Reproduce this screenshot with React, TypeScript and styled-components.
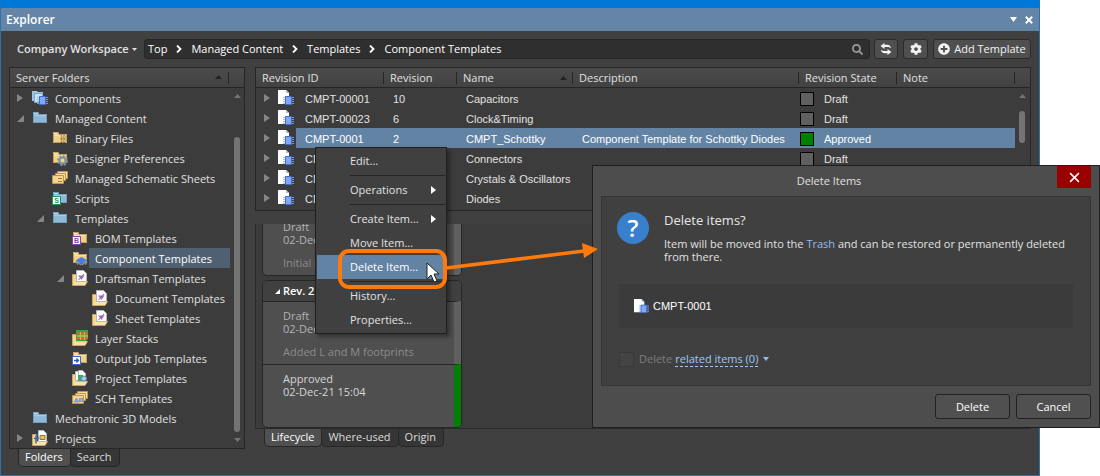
import React from "react";
import styled, { createGlobalStyle, css } from "styled-components";
import { FaCog, FaPlusCircle, FaSearch } from "react-icons/fa";

const ui = '"Open Sans", "Noto Sans", sans-serif';
const grid = '"Liberation Sans", Arial, sans-serif';

const GlobalStyle = createGlobalStyle`
  *, *::before, *::after { box-sizing: border-box; }
  body { margin: 0; background: #fff; font: 11px/16px ${ui}; color: #e0e0e0; }
  button, input { font: inherit; color: inherit; }
  ul { list-style: none; margin: 0; padding: 0; }
  svg { display: block; flex: none; }
`;

/* ---------- page and window frame ---------- */

const Page = styled.div`
  position: relative;
`;

const Window = styled.main`
  position: relative;
  margin-right: 60px;
  background: #404040;
  border: 1px solid #2f71ac;
  border-top: 8px solid #0078d7;
`;

const TitleBar = styled.header`
  display: flex;
  align-items: center;
  gap: 8px;
  height: 23px;
  padding: 0 6px 0 5px;
  background: #6485a6;
  color: #fff;
`;

const WindowTitle = styled.h1`
  flex: 1;
  margin: 0;
  font: 600 12px/16px ${ui};
`;

const BareButton = styled.button`
  display: flex;
  align-items: center;
  padding: 0;
  border: 0;
  background: none;
`;

const Toolbar = styled.div`
  display: flex;
  align-items: center;
  gap: 4px;
  padding: 8px;
`;

const WorkspaceButton = styled(BareButton)`
  gap: 3px;
  width: 131px;
  padding-left: 8px;
  font-weight: 600;
  white-space: nowrap;
`;

const PathBox = styled.nav`
  display: flex;
  flex: 1;
  align-items: center;
  height: 20px;
  padding: 0 6px 0 3px;
  gap: 9px;
  background: #2f2f2f;
  border: 1px solid #272727;
  border-radius: 3px;
  color: #fff;
`;

const Crumb = styled.a`
  color: inherit;
  text-decoration: none;
  white-space: nowrap;
`;

const SearchButton = styled(BareButton)`
  margin-left: auto;
  color: #9a9a9a;
`;

const ToolButton = styled.button<{ $width: number }>`
  display: flex;
  align-items: center;
  justify-content: center;
  gap: 4px;
  width: ${(p) => p.$width}px;
  height: 20px;
  padding: 0;
  margin-right: ${(p) => (p.$width < 40 ? 1 : 0)}px;
  background: #4f4f4f;
  border: 1px solid #2b2b2b;
  border-radius: 3px;
  color: #f2f2f2;
  white-space: nowrap;
`;

const Columns = styled.div`
  display: grid;
  grid-template-columns: 236px minmax(0, 1fr);
  gap: 10px;
  padding: 0 8px 8px;
`;

const Column = styled.section`
  display: flex;
  flex-direction: column;
`;

/* ---------- folder tree ---------- */

const headerFill = css`
  background: linear-gradient(#4b4b4b, #424242);
  border-bottom: 1px solid #262626;
`;

const TreePanel = styled.div`
  background: #3c3c3c;
  border: 1px solid #262626;
`;

const TreeHeader = styled.div`
  ${headerFill}
  display: flex;
  align-items: center;
  height: 20px;
  padding-left: 6px;
`;

const TreeTitle = styled.span`
  flex: 1;
  line-height: 18px;
  padding-top: 1px;
`;

const SortMark = styled.span`
  width: 14px;
  height: 12px;
  padding-top: 3px;
  border-right: 1px solid #262626;
`;

const TreeHeaderEnd = styled.span`
  width: 15px;
`;

const TreeBody = styled.div`
  display: flex;
`;

const Tree = styled.ul`
  flex: 1;
`;

const TreeRow = styled.li<{ $level: number }>`
  display: flex;
  align-items: center;
  height: 20px;
  padding-left: ${(p) => 7 + p.$level * 20}px;
`;

const Toggle = styled.span`
  width: 15px;
`;

const TreeLabel = styled.span<{ $selected?: boolean }>`
  flex: 1;
  height: 20px;
  padding: 3px 0 1px 6px;
  margin-left: 1px;
  background: ${(p) => (p.$selected ? "#4e6071" : "transparent")};
  color: ${(p) => (p.$selected ? "#fff" : "inherit")};
  white-space: nowrap;
`;

const ScrollTrack = styled.div`
  display: flex;
  flex-direction: column;
  align-items: center;
  width: 14px;
  padding: 6px 0;
`;

const Thumb = styled.div<{ $top: number; $height?: number }>`
  flex: ${(p) => (p.$height ? "none" : "1")};
  width: 6px;
  height: ${(p) => (p.$height ? p.$height + "px" : "auto")};
  margin: ${(p) => p.$top}px 0 6px;
  border-radius: 3px;
  background: #747474;
`;

const Tabs = styled.div`
  display: flex;
  padding-left: 9px;
`;

const Tab = styled.button<{ $active?: boolean }>`
  height: 18px;
  padding: 0 7px 1px 6px;
  margin-right: -1px;
  border: 1px solid #262626;
  border-top: 0;
  border-radius: 0 0 5px 5px;
  background: ${(p) => (p.$active ? "#505050" : "#363636")};
  color: ${(p) => (p.$active ? "#fff" : "#dcdcdc")};
  line-height: 16px;
`;

/* ---------- revision table ---------- */

const TablePanel = styled.div`
  padding-bottom: 2px;
  background: #3c3c3c;
  border: 1px solid #262626;
`;

const Table = styled.table`
  width: 100%;
  table-layout: fixed;
  border-collapse: separate;
  border-spacing: 0;
`;

const HeadCell = styled.th`
  ${headerFill}
  height: 20px;
  padding: 1px 0 0;
  font-weight: 400;
  text-align: left;
`;

const HeadInner = styled.div`
  display: flex;
  align-items: center;
  justify-content: space-between;
  height: 12px;
  padding: 0 5px 0 6px;
  border-right: 1px solid #262626;
  white-space: nowrap;
`;

const Row = styled.tr<{ $selected?: boolean }>`
  color: ${(p) => (p.$selected ? "#fff" : "#e2e2e2")};
  --row: ${(p) => (p.$selected ? "#6283a4" : "transparent")};
`;

const Cell = styled.td`
  height: 20px;
  padding: 2px 0 0 9px;
  background: var(--row);
  font: 11px/16px ${grid};
  white-space: nowrap;
`;

const IconCell = styled(Cell)`
  padding: 0;
  background: none;
`;

const IconPair = styled.div`
  display: flex;
  align-items: center;
  gap: 8px;
  padding-left: 8px;
`;

const StateCell = styled(Cell)`
  padding-left: 1px;
`;

const State = styled.div`
  display: flex;
  align-items: center;
  gap: 10px;
`;

const Swatch = styled.span<{ $color: string }>`
  width: 14px;
  height: 14px;
  border: 1px solid #000;
  background: ${(p) => p.$color};
`;

const ScrollCell = styled.td`
  padding: 0;
  vertical-align: top;
`;

/* ---------- lifecycle ---------- */

const LifecyclePanel = styled.div`
  display: flex;
  flex: 1;
  flex-direction: column;
  justify-content: flex-end;
  gap: 4px;
  max-height: 205px;
  margin-top: 13px;
  padding-left: 6px;
  overflow: hidden;
  background: #3c3c3c;
  border: 1px solid #2b2b2b;
  border-top: 0;
`;

const Card = styled.article`
  width: 200px;
  flex: none;
  overflow: hidden;
  border: 1px solid #262626;
  border-radius: 5px;
  background: #4f4f4f;
`;

const CardHeader = styled.h2`
  display: flex;
  align-items: center;
  gap: 3px;
  height: 20px;
  margin: 0;
  padding-left: 12px;
  background: #404040;
  color: #fff;
  font: 600 11px/16px ${ui};
`;

const Stage = styled.div<{ $color: string; $muted?: boolean }>`
  height: 63px;
  padding: 7px 20px;
  border-top: 1px solid #262626;
  border-right: 7px solid ${(p) => p.$color};
  color: ${(p) => (p.$muted ? "#b4b4b4" : "#d6d6d6")};
  line-height: 13px;
`;

const StageNote = styled.p`
  margin: 10px 0 0;
  color: #8c8c8c;
  white-space: nowrap;
`;

/* ---------- context menu and callout ---------- */

const Menu = styled.div`
  position: absolute;
  left: 314px;
  top: 139px;
  width: 132px;
  padding: 1px;
  background: #404040;
  border: 1px solid #1f1f1f;
  box-shadow: 3px 3px 4px rgba(0, 0, 0, 0.35);
`;

const MenuItem = styled.button<{ $active?: boolean }>`
  display: flex;
  align-items: center;
  justify-content: space-between;
  width: 100%;
  height: 24px;
  padding: 0 9px 0 33px;
  border: 0;
  background: ${(p) => (p.$active ? "#6283a4" : "transparent")};
  color: ${(p) => (p.$active ? "#fff" : "#e2e2e2")};
  white-space: nowrap;
`;

const MenuRule = styled.hr`
  height: 1px;
  margin: 2px 0 2px 33px;
  border: 0;
  background: #262626;
`;

const Callout = styled.svg`
  position: absolute;
  left: 330px;
  top: 240px;
  pointer-events: none;
`;

/* ---------- dialog ---------- */

const Dialog = styled.section`
  position: absolute;
  top: 165px;
  right: 0;
  width: 508px;
  padding: 0 8px 8px;
  background: #4d4d4d;
  border: 1px solid #1f1f1f;
`;

const DialogBar = styled.div`
  display: grid;
  grid-template-columns: 1fr 34px;
  align-items: start;
  height: 30px;
`;

const DialogTitle = styled.h2`
  margin: 0;
  padding-top: 7px;
  font: 11px/16px ${ui};
  text-align: center;
`;

const CloseButton = styled.button`
  display: flex;
  align-items: center;
  justify-content: center;
  height: 22px;
  padding: 0;
  border: 0;
  background: #990000;
  color: #fff;
`;

const DialogBody = styled.div`
  padding: 15px 17px 16px;
  background: #404040;
  border: 1px solid #363636;
`;

const Message = styled.div`
  display: flex;
  gap: 15px;
  align-items: flex-start;
`;

const QuestionMark = styled.span`
  width: 32px;
  height: 32px;
  flex: none;
  margin-left: -2px;
  border-radius: 50%;
  background: #3880cc;
  color: #fff;
  font: 600 24px/32px ${ui};
  text-align: center;
`;

const Question = styled.h3`
  margin: 0 0 8px;
  font: 13px/16px ${ui};
  color: #e6e6e6;
`;

const Explanation = styled.p`
  margin: 0;
  padding-top: 1px;
  line-height: 13px;
`;

const TextLink = styled.a`
  color: #8ebdf0;
  text-decoration: none;
`;

const ItemBox = styled.div`
  display: flex;
  align-items: center;
  gap: 4px;
  height: 44px;
  margin-top: 21px;
  padding-left: 15px;
  background: #3b3b3b;
  color: #fff;
  font: 11px/16px ${grid};
`;

const RelatedRow = styled.div`
  display: flex;
  align-items: center;
  gap: 5px;
  height: 20px;
  margin-top: 21px;
`;

const Check = styled.input`
  appearance: none;
  width: 15px;
  height: 15px;
  margin: 0;
  background: #444;
  border: 1px solid #393939;
`;

const CheckLabel = styled.label`
  color: #7d7d7d;
  margin-right: -2px;
`;

const RelatedLink = styled(TextLink)`
  color: #9cc8f5;
  line-height: 15px;
  border-bottom: 1px dashed #9cc8f5;
`;

const DialogButtons = styled.div`
  display: flex;
  justify-content: flex-end;
  gap: 6px;
  padding-top: 8px;
`;

const DialogButton = styled.button`
  width: 75px;
  height: 25px;
  padding: 0;
  border: 1px solid #222;
  border-radius: 3px;
  background: #505050;
  color: #fff;
`;

/* ---------- small marks ---------- */

const Down = ({ w = 8, h = 4 }: { w?: number; h?: number }) => (
  <svg width={w} height={h} viewBox="0 0 8 4" preserveAspectRatio="none" aria-hidden>
    <path d="M0 0h8L4 4z" fill="currentColor" />
  </svg>
);

const ScrollDown = () => (
  <svg width="7" height="4" viewBox="0 0 7 4" aria-hidden>
    <path d="M0 0h7L3.500 4z" fill="#747474" />
  </svg>
);

const Up = ({ color = "#747474" }: { color?: string }) => (
  <svg width="7" height="4" viewBox="0 0 7 4" aria-hidden>
    <path d="M0 4h7L3.500 0z" fill={color} />
  </svg>
);

const Right = ({ color = "#858585", width = 6 }: { color?: string; width?: number }) => (
  <svg width={width} height="8" viewBox="0 0 6 8" preserveAspectRatio="none" aria-hidden>
    <path d="M0 0v8l6-4z" fill={color} />
  </svg>
);

const Expanded = ({ color = "#858585", size = 7 }: { color?: string; size?: number }) => (
  <svg width={size} height={size} viewBox="0 0 7 7" aria-hidden>
    <path d="M7 0v7H0z" fill={color} />
  </svg>
);

const Cross = ({ size, weight }: { size: number; weight: number }) => (
  <svg width={size} height={size} viewBox="0 0 10 10" aria-hidden>
    <path d="M1 1l8 8M9 1L1 9" stroke="currentColor" strokeWidth={weight} />
  </svg>
);

const Chevron = () => (
  <svg width="6" height="8" viewBox="0 0 6 8" aria-hidden>
    <path d="M1 .5L4.500 4 1 7.500" fill="none" stroke="#fff" strokeWidth="1.800" />
  </svg>
);

const RefreshIcon = () => (
  <svg width="12" height="12" viewBox="0 0 12 12" aria-hidden>
    <path d="M4.500 0v1.800h2.700c2.200 0 3.600 1.200 3.800 3.400C10 4.300 8.800 4 7.200 4H4.500v1.900L.5 2.900z" fill="currentColor" />
    <path d="M7.500 12v-1.800H4.800C2.600 10.200 1.200 9 1 6.800 2 7.700 3.200 8 4.800 8h2.700V6.100l4 3z" fill="currentColor" />
  </svg>
);

/* ---------- folder and item icons ---------- */

type IconKind =
  | "components" | "folder" | "binary" | "prefs" | "sheets" | "scripts" | "bom"
  | "chip" | "draftsman" | "layers" | "output" | "project" | "sch" | "projects";

const Folder = ({ blue }: { blue?: boolean }) => (
  <>
    <path d="M1 2h5l1 2h8v9H1z" fill={blue ? "#8fb9d6" : "#efd08c"} />
    <path d="M1 2h5l1 2H1z" fill={blue ? "#c3dcec" : "#fbebbd"} />
    <path d="M1.500 2.500h4.200l1 2h7.800v8h-13z" fill="none" stroke={blue ? "#6f9fc0" : "#c79f57"} />
    <path d="M2 5.500h12" stroke={blue ? "#a9cce3" : "#f9e3ae"} />
  </>
);

const OpenFolder = () => (
  <>
    <path d="M.5 4.500h4v7h11l-2.500 4H.5z" fill="#f3d592" stroke="#cda35a" />
    <path d="M1 15l2.500-3.500H15L13 15z" fill="#f8e2ad" />
  </>
);

const Chip = ({ x, y }: { x: number; y: number }) => (
  <g transform={`translate(${x} ${y})`}>
    <path d="M0 1.500h11M0 3.500h11M0 5.500h11M0 7.500h11" stroke="#8eaef2" strokeWidth=".8" />
    <path d="M2.500 .5h6v8h-6z" fill="#83a8f6" stroke="#3f6cd6" />
  </g>
);

const SheetStack = () => (
  <>
    <path d="M5.500 1.500h10v7h-10z" fill="#f6dfa6" stroke="#c0954a" />
    <path d="M3.500 3.500h10v7h-10z" fill="#f6dfa6" stroke="#c0954a" />
    <path d="M.5 5.500h11v8H.5z" fill="#f3d592" stroke="#c0954a" />
  </>
);

const Badge = ({ text, color }: { text: string; color: string }) => (
  <>
    <path d="M.5 6.500h8v8h-8z" fill="#fff" stroke={color} />
    <text x="4.500" y="13" textAnchor="middle" fontFamily="Liberation Sans" fontWeight="700" fontSize="7" fill={color}>
      {text}
    </text>
  </>
);

const Icon = ({ kind }: { kind: IconKind }) => (
  <svg width="16" height="16" viewBox="0 0 16 16" aria-hidden>
    {kind === "folder" && <Folder blue />}
    {kind === "components" && (
      <>
        <path d="M0 1h5l1 1h5v9H0z" fill="#9cc3dc" />
        <path d="M2.500 3.500h8v9h-8z" fill="#c8dfee" stroke="#7aa8c8" />
        <Chip x={5} y={6} />
      </>
    )}
    {kind === "binary" && (
      <>
        <Folder />
        <text x="8" y="8.500" fontFamily="Liberation Sans" fontSize="5" fill="#6b4d12">10</text>
        <text x="8" y="12.500" fontFamily="Liberation Sans" fontSize="5" fill="#6b4d12">10</text>
      </>
    )}
    {kind === "prefs" && (
      <>
        <Folder />
        <circle cx="10.500" cy="10.500" r="4.500" fill="none" stroke="#8495a1" strokeWidth="2" strokeDasharray="2 1.500" />
        <circle cx="10.500" cy="10.500" r="3" fill="#f3d592" stroke="#7f929f" strokeWidth="2" />
      </>
    )}
    {kind === "sheets" && (
      <>
        <SheetStack />
        <path d="M6 8.500h4M6 11.500h4" stroke="#a97b2e" />
      </>
    )}
    {kind === "sch" && (
      <>
        <SheetStack />
        <path d="M2 12l2.500-4L7 12zM7.500 8.500h3v3h-3z" fill="#8fa9ea" stroke="#5e7ed0" strokeWidth=".6" />
      </>
    )}
    {kind === "scripts" && (
      <>
        <Folder blue />
        <Badge text="S" color="#23905d" />
      </>
    )}
    {kind === "bom" && (
      <>
        <Folder />
        <Badge text="B" color="#8c3f9c" />
      </>
    )}
    {kind === "output" && (
      <>
        <Folder />
        <path d="M.5 6.500h8v8h-8z" fill="#fff" stroke="#2d6fc4" />
        <path d="M2 10.500h4M4.500 8.500l2 2-2 2" fill="none" stroke="#2459b4" strokeWidth="1.300" />
      </>
    )}
    {kind === "chip" && (
      <>
        <Folder />
        <path d="M4 11.500l2 3M7 13l2 2M12 13l-2 2M15 11.500l-2 3" stroke="#8b929c" strokeWidth="1.500" />
        <path d="M3.500 10.500L9.500 7l6 3.500-6 3.500z" fill="#4a7de0" />
      </>
    )}
    {kind === "draftsman" && (
      <>
        <OpenFolder />
        <path d="M4.500 .5h7l3 3v8h-10z" fill="#fdfdff" stroke="#b3b6c0" />
        <path d="M6 5.500h6.500L9.500 10z" fill="#8c7bd6" />
        <path d="M6.500 10l5.500-6" stroke="#c64b63" />
      </>
    )}
    {kind === "layers" && (
      <>
        <OpenFolder />
        <path d="M4 0h12v9l-2 2H4z" fill="#37a53c" />
        <path d="M5 3.500h11M5 8h11" stroke="#e9603a" strokeWidth="2" />
        <path d="M5 6h11" stroke="#f4d65d" />
        <path d="M8.500 2v8M12.500 2v8" stroke="#d9b04a" />
      </>
    )}
    {kind === "project" && (
      <>
        <OpenFolder />
        <path d="M3.500 1.500h6v9h-6z" fill="#fff" stroke="#b3b6c0" />
        <path d="M6.500 .5h4l3 3v8h-7z" fill="#fff" stroke="#b3b6c0" />
        <path d="M6 5h5v6H6z" fill="#3ea95c" />
        <circle cx="12" cy="8.500" r="2.500" fill="#a5cbe8" stroke="#5e8fb8" />
      </>
    )}
    {kind === "projects" && (
      <>
        <OpenFolder />
        <path d="M6.500 .5h5l3 3v8h-8z" fill="#fff" stroke="#b3b6c0" />
        <path d="M8 5.500h5v4H8z" fill="#e9bd63" stroke="#9a7635" />
        <path d="M6 4.500c-2 0-2 1-2 3v6M2 8.500h5" fill="none" stroke="#2c6fc2" strokeWidth="1.500" />
      </>
    )}
  </svg>
);

const ItemIcon = ({ size = 16 }: { size?: number }) => (
  <svg width={size} height={size} viewBox="0 0 16 16" aria-hidden>
    <path d="M0 0h8l3 3v11H0z" fill="#fff" />
    <path d="M8 0v3h3z" fill="#a9bccb" />
    <Chip x={5} y={6} />
  </svg>
);

/* ---------- data ---------- */

type Node = { label: string; level: number; icon: IconKind; toggle?: "open" | "closed"; selected?: boolean };

const nodes: Node[] = [
  { label: "Components", level: 0, icon: "components", toggle: "closed" },
  { label: "Managed Content", level: 0, icon: "folder", toggle: "open" },
  { label: "Binary Files", level: 1, icon: "binary" },
  { label: "Designer Preferences", level: 1, icon: "prefs" },
  { label: "Managed Schematic Sheets", level: 1, icon: "sheets" },
  { label: "Scripts", level: 1, icon: "scripts" },
  { label: "Templates", level: 1, icon: "folder", toggle: "open" },
  { label: "BOM Templates", level: 2, icon: "bom" },
  { label: "Component Templates", level: 2, icon: "chip", selected: true },
  { label: "Draftsman Templates", level: 2, icon: "draftsman", toggle: "open" },
  { label: "Document Templates", level: 3, icon: "draftsman" },
  { label: "Sheet Templates", level: 3, icon: "draftsman" },
  { label: "Layer Stacks", level: 2, icon: "layers" },
  { label: "Output Job Templates", level: 2, icon: "output" },
  { label: "Project Templates", level: 2, icon: "project" },
  { label: "SCH Templates", level: 2, icon: "sch" },
  { label: "Mechatronic 3D Models", level: 0, icon: "folder" },
  { label: "Projects", level: 0, icon: "projects", toggle: "closed" },
];

const revisions = [
  { id: "CMPT-00001", rev: "10", name: "Capacitors", text: "", state: "Draft" },
  { id: "CMPT-00023", rev: "6", name: "Clock&Timing", text: "", state: "Draft" },
  { id: "CMPT-0001", rev: "2", name: "CMPT_Schottky", text: "Component Template for Schottky Diodes", state: "Approved" },
  { id: "CMPT-00022", rev: "4", name: "Connectors", text: "", state: "Draft" },
  { id: "CMPT-00021", rev: "3", name: "Crystals & Oscillators", text: "", state: "Draft" },
  { id: "CMPT-00003", rev: "5", name: "Diodes", text: "", state: "Draft" },
];

const path = ["Top", "Managed Content", "Templates", "Component Templates"];

/* ---------- parts ---------- */

const FolderTree = () => (
  <Column>
    <TreePanel>
      <TreeHeader>
        <TreeTitle>Server Folders</TreeTitle>
        <SortMark><Up color="#222" /></SortMark>
        <TreeHeaderEnd />
      </TreeHeader>
      <TreeBody>
        <Tree role="tree">
          {nodes.map((n) => (
            <TreeRow key={n.label} $level={n.level} role="treeitem" aria-selected={!!n.selected}>
              <Toggle>
                {n.toggle === "open" && <Expanded />}
                {n.toggle === "closed" && <Right />}
              </Toggle>
              <Icon kind={n.icon} />
              <TreeLabel $selected={n.selected}>{n.label}</TreeLabel>
            </TreeRow>
          ))}
        </Tree>
        <ScrollTrack>
          <Up />
          <Thumb $top={39} />
          <ScrollDown />
        </ScrollTrack>
      </TreeBody>
    </TreePanel>
    <Tabs role="tablist">
      <Tab role="tab" $active aria-selected>Folders</Tab>
      <Tab role="tab">Search</Tab>
    </Tabs>
  </Column>
);

const RevisionTable = () => (
  <TablePanel>
    <Table>
      <colgroup>
        <col width="40" />
        <col width="88" />
        <col width="73" />
        <col width="116" />
        <col width="226" />
        <col width="98" />
        <col />
        <col width="15" />
      </colgroup>
      <thead>
        <tr>
          <HeadCell colSpan={2}><HeadInner>Revision ID</HeadInner></HeadCell>
          <HeadCell><HeadInner>Revision</HeadInner></HeadCell>
          <HeadCell><HeadInner>Name <Up color="#222" /></HeadInner></HeadCell>
          <HeadCell><HeadInner>Description</HeadInner></HeadCell>
          <HeadCell><HeadInner>Revision State</HeadInner></HeadCell>
          <HeadCell><HeadInner>Note</HeadInner></HeadCell>
          <HeadCell />
        </tr>
      </thead>
      <tbody>
        {revisions.map((r, i) => (
          <Row key={r.id} $selected={r.state === "Approved"}>
            <IconCell>
              <IconPair><Right /><ItemIcon /></IconPair>
            </IconCell>
            <Cell>{r.id}</Cell>
            <Cell>{r.rev}</Cell>
            <Cell>{r.name}</Cell>
            <Cell>{r.text}</Cell>
            <StateCell>
              <State>
                <Swatch $color={r.state === "Approved" ? "#008000" : "#606060"} />
                {r.state}
              </State>
            </StateCell>
            <Cell />
            {i === 0 && (
              <ScrollCell rowSpan={revisions.length}>
                <ScrollTrack>
                  <Up />
                  <Thumb $top={13} $height={32} />
                </ScrollTrack>
              </ScrollCell>
            )}
          </Row>
        ))}
      </tbody>
    </Table>
  </TablePanel>
);

const Lifecycle = () => (
  <LifecyclePanel>
    <Card>
      <Stage $color="#606060" $muted>
        Draft<br />02-Dec-21 14:58
        <StageNote>Initial revision</StageNote>
      </Stage>
    </Card>
    <Card>
      <CardHeader><Expanded size={5} color="#fff" />Rev. 2</CardHeader>
      <Stage $color="#606060" $muted>
        Draft<br />02-Dec-21 15:02
        <StageNote>Added L and M footprints</StageNote>
      </Stage>
      <Stage $color="#008000">
        Approved<br />02-Dec-21 15:04
      </Stage>
    </Card>
  </LifecyclePanel>
);

const ContextMenu = () => (
  <Menu role="menu">
    <MenuItem role="menuitem">Edit...</MenuItem>
    <MenuRule />
    <MenuItem role="menuitem">Operations <Right color="#fff" width={5} /></MenuItem>
    <MenuRule />
    <MenuItem role="menuitem">Create Item... <Right color="#fff" width={5} /></MenuItem>
    <MenuItem role="menuitem">Move Item...</MenuItem>
    <MenuItem role="menuitem" $active>Delete Item...</MenuItem>
    <MenuRule />
    <MenuItem role="menuitem">History...</MenuItem>
    <MenuItem role="menuitem">Properties...</MenuItem>
  </Menu>
);

const DeleteDialog = () => (
  <Dialog role="dialog" aria-labelledby="dialog-title">
    <DialogBar>
      <DialogTitle id="dialog-title">Delete Items</DialogTitle>
      <CloseButton aria-label="Close dialog"><Cross size={11} weight={1.4} /></CloseButton>
    </DialogBar>
    <DialogBody>
      <Message>
        <QuestionMark>?</QuestionMark>
        <div>
          <Question>Delete items?</Question>
          <Explanation>
            Item will be moved into the <TextLink href="#trash">Trash</TextLink> and can be restored or permanently deleted from there.
          </Explanation>
        </div>
      </Message>
      <ItemBox><ItemIcon size={15} />CMPT-0001</ItemBox>
      <RelatedRow>
        <Check type="checkbox" id="related" disabled />
        <CheckLabel htmlFor="related">Delete</CheckLabel>
        <RelatedLink href="#related">related items (0)</RelatedLink>
        <TextLink href="#related" aria-label="Show related items"><Down w={6} /></TextLink>
      </RelatedRow>
    </DialogBody>
    <DialogButtons>
      <DialogButton>Delete</DialogButton>
      <DialogButton>Cancel</DialogButton>
    </DialogButtons>
  </Dialog>
);

export default function App() {
  return (
    <Page>
      <GlobalStyle />
      <Window>
        <TitleBar>
          <WindowTitle>Explorer</WindowTitle>
          <BareButton aria-label="Window menu"><Down w={7} h={5} /></BareButton>
          <BareButton aria-label="Close window"><Cross size={8} weight={2.4} /></BareButton>
        </TitleBar>
        <Toolbar>
          <WorkspaceButton>Company Workspace <Down w={5} h={3} /></WorkspaceButton>
          <PathBox aria-label="Path">
            {path.map((p, i) => (
              <React.Fragment key={p}>
                {i > 0 && <Chevron />}
                <Crumb href={"#" + i}>{p}</Crumb>
              </React.Fragment>
            ))}
            <SearchButton aria-label="Search"><FaSearch size={11} /></SearchButton>
          </PathBox>
          <ToolButton $width={24} aria-label="Refresh"><RefreshIcon /></ToolButton>
          <ToolButton $width={25} aria-label="Settings"><FaCog size={12} /></ToolButton>
          <ToolButton $width={98}><FaPlusCircle size={12} />Add Template</ToolButton>
        </Toolbar>
        <Columns>
          <FolderTree />
          <Column>
            <RevisionTable />
            <Lifecycle />
            <Tabs role="tablist">
              <Tab role="tab" $active aria-selected>Lifecycle</Tab>
              <Tab role="tab">Where-used</Tab>
              <Tab role="tab">Origin</Tab>
            </Tabs>
          </Column>
        </Columns>
        <ContextMenu />
      </Window>
      <DeleteDialog />
      <Callout width="280" height="56" viewBox="0 0 280 56" aria-hidden>
        <rect x="10" y="11" width="105" height="36" rx="9" fill="none" stroke="#ff7a0a" strokeWidth="4" />
        <path d="M116 28L254 11" stroke="#ff7a0a" strokeWidth="3.500" />
        <path d="M252 3l16 6-14 9z" fill="#ff7a0a" />
        <path d="M97 23v16l4-4 3 7 3-1-3-7h5z" fill="#fff" stroke="#222" />
      </Callout>
    </Page>
  );
}
